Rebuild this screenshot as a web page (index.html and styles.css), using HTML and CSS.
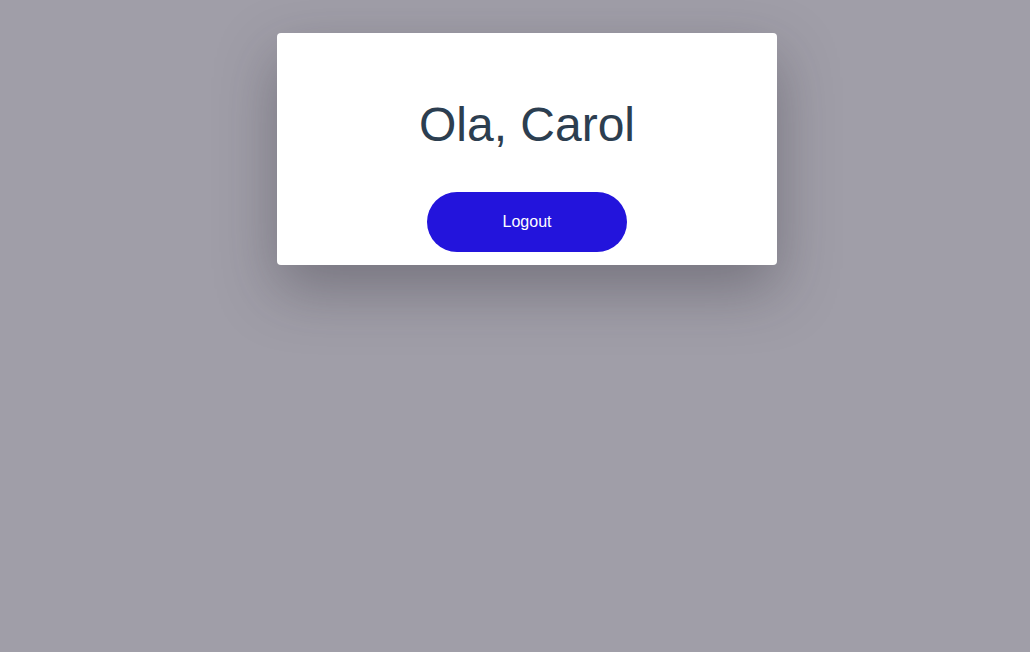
FILE: index.html
```html
<!DOCTYPE html>
<html lang="pt">
<head>
<meta charset="utf-8">
<title>Ola, Carol</title>
<link rel="stylesheet" href="styles.css">
</head>
<body>
<div class="page">
  <div class="card">
    <h1 class="greeting">Ola, Carol</h1>
    <button class="logout">Logout</button>
  </div>
</div>
</body>
</html>
```

FILE: styles.css
```css
html, body {
  margin: 0;
  height: 100%;
  background: #a09ea8;
  font-family: "Liberation Sans", Arial, sans-serif;
}
.page {
  display: flex;
  justify-content: center;
  align-items: flex-start;
  padding: 33px 0 0 24px;
  box-sizing: border-box;
  min-height: 100%;
}
.card {
  width: 500px;
  box-sizing: border-box;
  background: #ffffff;
  border-radius: 4px;
  padding: 64px 0 13px;
  display: flex;
  flex-direction: column;
  align-items: center;
  box-shadow: 0 24px 60px rgba(40, 38, 50, 0.35);
}
.greeting {
  margin: 0 0 40px;
  font-size: 48px;
  font-weight: 400;
  line-height: normal;
  color: #2c3e50;
}
.logout {
  width: 200px;
  height: 60px;
  border: none;
  border-radius: 30px;
  background: #2314dc;
  color: #ffffff;
  font-family: "Liberation Sans", Arial, sans-serif;
  font-size: 16px;
  cursor: pointer;
}
```
